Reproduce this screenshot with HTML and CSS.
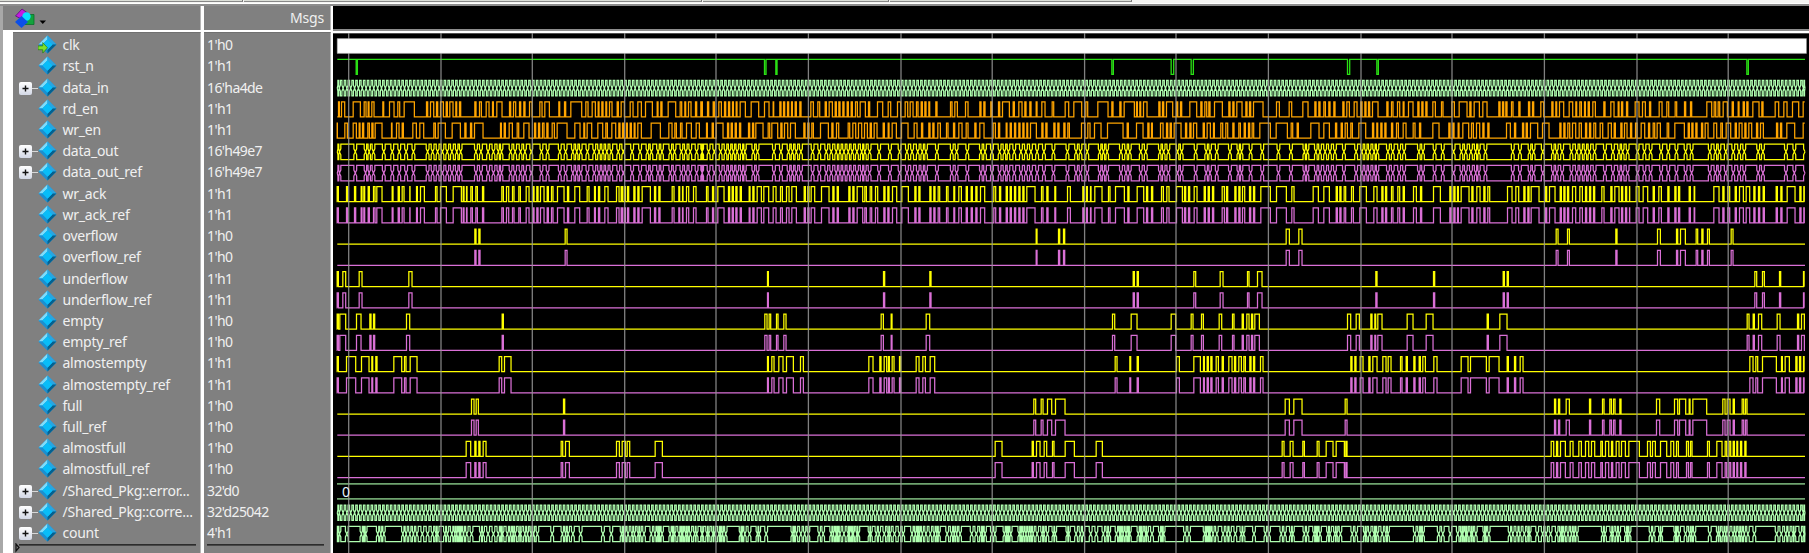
FILE: index.html
```html
<!DOCTYPE html>
<html lang="en">
<head>
<meta charset="utf-8">
<title>Wave</title>
<link rel="stylesheet" href="styles.css">
</head>
<body>
<svg class="defs" width="0" height="0" aria-hidden="true">
  <symbol id="gem" viewBox="0 0 20 20">
    <path d="M10 .6 19.4 10 10 19.4 .6 10z" fill="#1793d6"/>
    <path d="M10 .6 .6 10h4L10 4.800z" fill="#7fdcfa"/>
    <path d="M10 .6 19.400 10h-4L10 4.800z" fill="#2aa5e0"/>
    <path d="M.6 10 10 19.400v-4L4.600 10z" fill="#1c8fd0"/>
    <path d="M19.400 10 10 19.400v-4L15.400 10z" fill="#04618f"/>
    <path d="M10 4.600 15.400 10 10 15.400 4.600 10z" fill="#08bdf8"/>
  </symbol>
</svg>
<div class="window">
  <div class="tabs"><i class="tab t1"></i><i class="tab t2"></i><i class="tab t3"></i><i class="tab t4"></i></div>
  <div class="panes">
    <div class="names">
      <div class="head">
        <svg class="logo" width="34" height="22" viewBox="0 0 34 22">
          <path d="M1.500 8 8 1l5.500 4-6 6z" fill="#c31be0" stroke="#5b0a77" stroke-width=".8"/>
          <path d="M13 6.500h7v10h-9z" fill="#12a33c" stroke="#08702a" stroke-width=".8"/>
          <circle cx="12.500" cy="8.500" r="4.200" fill="#08e0ff"/>
          <path d="M7.500 8 14 14 7.500 20 1 14z" fill="#0b4fe8"/>
          <path d="M25.500 12.500h6.500l-3.200 3.400z" fill="#000"/>
        </svg>
      </div>
      <div class="list" id="names"></div>
    </div>
    <div class="values">
      <div class="head msgs">Msgs</div>
      <div class="list" id="values"></div>
    </div>
    <div class="waves">
      <div class="ruler"></div>
      <svg class="plot" id="plot" width="1476" height="520" viewBox="333 33 1476 520"></svg>
    </div>
  </div>
</div>
<script src="wave.js"></script>
</body>
</html>
```
FILE: styles.css
```css
body {
  margin: 0;
  background: #fff;
  overflow: hidden;
  font-family: "Noto Sans", "Open Sans", sans-serif;
}
.defs { position: absolute; }
.window {
  display: flex;
  flex-direction: column;
  width: 1809px;
  height: 553px;
}
.tabs {
  display: flex;
  gap: 1px;
  height: 3px;
  background: #f4f4f2;
  border-bottom: 1px solid #fff;
}
.tab {
  box-sizing: border-box;
  height: 2px;
  background: #dcdfd8;
  border-right: 1px solid #777;
  border-bottom: 1px solid #888;
}
.t1 { width: 243px; }
.t2 { width: 458px; }
.t3 { width: 186px; }
.t4 { width: 242px; }
.panes {
  box-sizing: border-box;
  display: flex;
  flex: 1;
  border-top: 2px solid #8d8d8d;
}
.names {
  box-sizing: border-box;
  width: 202px;
  border-left: 3px solid #a8a8a8;
  border-right: 1px solid #fff;
  background: #fff;
}
.values {
  box-sizing: border-box;
  width: 131px;
  padding-left: 2px;
  border-right: 2px solid #fff;
  background: #fff;
}
.head {
  box-sizing: border-box;
  height: 24px;
  margin-bottom: 2px;
  background: #808080;
  border-right: 1px solid #b5b5b5;
}
.logo { display: block; margin: 0 0 0 11px; padding-top: 2px; }
.msgs {
  padding-right: 6px;
  text-align: right;
  line-height: 24px;
  font-size: 14px;
  letter-spacing: -.2px;
  color: #f0f0f0;
}
.list {
  box-sizing: border-box;
  height: 521px;
  padding-top: 1px;
  background: #808080;
  border-top: 1px solid #707070;
  border-right: 1px solid #b5b5b5;
}
.names .list { margin-left: 10px; }
.row {
  display: flex;
  align-items: center;
  height: 21.22px;
  font-size: 14px;
  letter-spacing: -.24px;
  color: #f0f0f0;
  white-space: nowrap;
}
.slot {
  display: flex;
  align-items: center;
  justify-content: flex-end;
  width: 25px;
}
.plus {
  box-sizing: border-box;
  width: 13px;
  height: 13px;
  margin-top: 2px;
  background: linear-gradient(#fff, #d3d8e6);
  border-radius: 2px;
}
.plus svg { display: block; }
.link {
  width: 6px;
  height: 1px;
  margin-top: 2px;
  background: #d8d8d8;
}
.gem { flex: none; width: 19px; height: 19px; }
.name { padding-left: 5.500px; }
.values .row { padding-left: 3px; letter-spacing: -.6px; }
.end { display: block; }
.ruler {
  height: 22.500px;
  background: #000;
  border-bottom: 2px solid #8d8d8d;
  margin-bottom: 2px;
}
.waves { width: 1476px; background: #fff; }
.plot { display: block; background: #000; }
.num { font: 14px "Noto Sans", sans-serif; fill: #e8f4ff; }
```
FILE: wave.js
```js
const BASES = [330, 700, 1070, 1430];
const X0 = 337.3, X1 = 1805, CLOCK = 3.843;
const PITCH = 21.23, TOP = 38.1, TALL = 15;

// High intervals per segment, in thirds of a pixel from the segment base.
const W = {
rd: [
'24-29 33-45 68-92 101-109 113-118 124-133 157-162 177-193 202-210 221-254 288-294 300-312 318-324 330-341 347-353 358-370 376-381 387-393 433-439 447-455 467-478 486-491 499-517 537-543 549-558 567-573 580-586 597-607 628-637 643-659 685-690 702-708 721-756 766-775 785-797 803-808 814-820 826-831 837-847 860-866 872-884 899-910 922-935 945-968 980-985 991-997 1013-1038 1049-1056 1063-1068 1074-1084 1095-1101 1112-1118',
'1-8 21-27 38-44 55-65 72-78 84-90 96-101 107-112 119-137 152-177 192-208 218-222 238-244 249-255 261-267 273-278 284-290 298-304 331-341 352-360 374-380 386-398 404-410 415-421 427-433 440-446 452-458 465-473 479-497 504-510 531-549 563-573 591-603 614-624 629-640 648-655 662-668 673-679 685-690 706-712 750-757 763-773 795-805 838-844 850-856 871-877 894-900 906-929 938-944 955-967 973-979 988-994 1007-1012 1024-1036 1055-1062 1094-1107',
'10-36 46-54 82-115 124-130 148-154 161-194 198-203 208-213 219-232 265-271 276-282 288-309 318-324 330-336 358-381 391-397 403-411 415-421 432-458 475-481 487-493 499-517 526-532 537-543 549-580 618-629 656-666 697-715 733-739 745-751 760-767 775-781 790-796 817-823 829-839 851-862 871-877 883-889 894-900 906-925 949-955 963-970 981-990 998-1003 1014-1030 1042-1048 1054-1060 1066-1072',
'7-17 33-40 64-74 86-112 118-124 131-149 157-172 205-211 216-222 226-232 243-250 265-271 294-300 306-312 331-342 364-370 376-381 387-402 416-429 436-441 448-455 462-467 473-479 487-497 520-526 541-553 563-568 573-579 588-594 614-628 636-647 657-663 686-697 709-717 734-741 762-768 780-786 829-846 851-858 863-870 878-893 905-911 923-928 938-944 949-955 967-988 994-1000 1034-1047 1060-1072 1086-1107 1118-1130'],
wr: [
'20-23 43-53 68-80 86-91 96-102 112-119 124-130 134-157 183-187 198-208 215-221 247-260 268-282 310-317 323-347 365-392 403-409 420-426 432-460 510-515 521-527 536-548 560-567 580-598 612-618 624-630 636-643 649-655 665-674 680-712 733-751 760-765 770-786 802-819 826-833 844-858 865-871 876-882 888-893 899-905 911-916 922-935 962-992 1015-1027 1033-1040 1050-1057 1068-1085 1097-1109',
'18-23 35-41 47-70 81-87 92-98 104-110 117-123 144-150 156-162 166-190 203-210 214-234 241-247 252-264 270-287 310-316 322-328 334-341 360-386 394-400 408-417 443-450 457-468 474-486 492-503 509-515 521-532 548-554 563-568 575-590 603-625 641-652 663-669 685-691 697-703 712-722 738-745 759-765 775-787 797-805 823-829 838-853 878-887 894-900 917-922 929-935 942-948 955-961 967-973 979-984 990-1010 1024-1030 1036-1042 1060-1066 1072-1078 1090-1096 1102-1109',
'33-46 52-61 72-94 111-160 170-176 198-220 232-238 243-248 270-280 288-294 299-305 311-334 345-351 358-364 369-381 398-404 410-422 429-434 451-459 466-474 487-493 505-512 521-527 534-540 545-552 568-602 617-653 662-669 680-686 721-748 760-779 795-801 812-818 824-833 841-848 865-888 906-912 919-924 931-937 943-949 963-969 978-986 998-1009 1028-1036 1047-1053',
'7-28 55-61 67-73 83-88 97-117 123-131 138-150 157-163 172-178 228-242 252-258 276-282 287-293 300-324 336-358 388-394 400-406 412-420 426-438 446-455 465-471 477-483 490-498 509-519 533-545 551-557 571-577 582-592 600-606 615-622 632-645 654-660 668-675 680-692 710-717 733-764 773-779 784-790 796-802 813-819 824-835 850-861 871-878 887-903 914-920 926-937 943-949 955-966 978-984 990-1001 1038-1044 1050-1056 1069-1095 1118-1130'],
ack: [
'20-26 48-53 72-78 92-97 100-105 113-119 129-136 139-157 185-190 203-209 215-223 238-241 258-263 270-284 315-322 330-350 368-395 398-403 408-412 421-428 436-443 456-462 514-521 528-537 546-553 565-572 587-598 608-613 619-625 630-643 650-656 663-670 681-703 711-717 733-750 770-778 792-797 804-810 823-835 858-868 872-878 881-887 891-897 910-916 922-928 935-962 972-978 985-991 1025-1033 1045-1050 1056-1060 1068-1077 1089-1099',
'18-25 36-42 52-73 84-90 95-101 106-112 119-125 146-151 157-163 170-185 190-207 218-229 240-248 258-268 274-290 311-317 322-328 332-345 363-388 397-403 410-416 445-451 457-463 470-489 493-500 509-516 525-534 550-556 562-568 576-591 604-626 643-649 655-661 688-694 700-706 713-720 738-745 760-765 775-785 797-803 812-818 826-832 840-855 880-888 897-903 917-923 929-935 942-948 955-961 967-973 979-1006 1023-1030 1039-1045 1063-1068 1101-1112',
'37-43 48-53 60-64 73-97 114-121 135-164 172-178 200-222 228-234 243-249 273-281 289-298 318-338 342-348 354-360 371-382 401-407 413-419 426-432 455-464 468-474 493-499 505-511 516-525 537-543 549-555 571-602 618-650 664-673 728-746 760-779 797-803 808-814 821-828 843-851 868-890 910-922 934-940 945-951 963-970 982-990 998-1004 1029-1040 1050-1056',
'9-32 58-64 70-76 81-86 92-118 124-130 139-151 160-166 172-180 231-247 256-267 280-286 292-298 302-328 345-351 357-376 389-395 400-406 411-417 426-438 448-458 465-471 477-483 489-495 514-523 541-547 553-568 573-579 585-591 597-600 617-628 638-654 668-674 685-695 712-718 733-739 744-750 776-782 791-795 850-868 877-883 892-900 914-920 927-941 947-960 970-976 984-990 998-1004 1037-1043 1051-1057 1070-1096 1108-1114 1120-1126'],
overflow: ['433-439 445-451 704-712', '1007-1012 1074-1080 1089-1095', '647-659 685-697', '377-385 411-419 556-562 681-692 738-744 750-767 797-804 814-820 831-839 902-910'],
underflow: ['20-26 37-48 86-97 235-247', '201-206 549-555 688-694', '188-194 200-206 370-378 449-460 531-538 561-577 916-922', '9-15 218-224 230-236 973-981 996-1004 1047-1053 1119-1130'],
empty: ['20-26 28-48 78-94 118-124 129-135 228-240 515-521', '193-202 206-213 228-235 250-259 542-551 572-577 677-690', '126-135 182-202 302-318 362-370 393-401 446-456 486-493 515-521 529-538 543-549 553-569 831-843 857-869 901-907 913-918 922-937 1010-1030 1067-1090', '170-176 208-232 950-958 968-974 984-996 1040-1051 1101-1107 1113-1124'],
aempty: ['20-26 48-78 93-118 124-129 136-142 190-216 222-229 239-262 506-516 522-544', '201-206 214-223 235-250 258-281 300-311 505-520 538-544 551-561 564-569 575-583 597-603 647-658 667-677 689-705', '134-142 178-183 200-206 318-329 370-392 399-404 410-416 421-427 437-446 455-461 475-487 492-498 505-515 520-527 538-544 549-555 570-580 841-847 853-859 869-880 895-901 907-922 937-949 953-964 990-997 1007-1013 1030-1036 1046-1052 1057-1067', '10-22 92-115 120-170 176-208 230-236 252-258 269-280 958-970 976-984 996-1040 1053-1058 1064-1079 1096-1102 1107-1113 1119-1125'],
full: ['423-433 437-446 699-705', '1000-1008 1022-1030 1041-1056 1065-1096', '644-659 670-697 824-832', '372-378 384-390 407-419 477-483 516-523 538-545 549-556 568-574 678-690 732-744 747-768 776-781 787-831 877-886 890-901 908-914 935-942 945-952'],
afull: ['407-423 433-439 445-451 458-469 692-699 705-719 858-869 875-887 890-900 974-998', '884-907 995-1001 1008-1021 1031-1041 1056-1063 1094-1124', '77-98 635-643 659-670 697-704 740-748 767-790 797-824 826-832', '362-372 378-384 390-407 419-430 445-455 465-477 483-495 511-518 525-537 543-549 557-568 573-587 595-629 651-662 666-677 690-711 721-732 738-746 768-776 780-787 831-839 859-877 884-891 896-903 908-914 919-924 930-936 943-949'],
rstLow: ['77-83', '192-199 226-232', '124-131 302-312 362-371 831-840 919-926', '949-956']
};
const S = {};
for (const k in W) {
  S[k] = W[k].flatMap((s, i) => s.split(' ').map(p => p.split('-').map(v => Math.min(X1, BASES[i] + v / 3))));
}
const isHigh = (list, x) => list.some(([a, b]) => x >= a && x < b);

const yTop = row => TOP + PITCH * row;
const f = n => n.toFixed(2);

function bit(list, row, inverted) {
  const hi = yTop(row), lo = hi + TALL;
  const rest = inverted ? hi : lo, active = inverted ? lo : hi;
  let d = `M${X0} ${f(rest)}`;
  for (const [a, b] of list) {
    const l = a + .5, r = b - .3;
    d += `H${f(l)}V${f(active)}`;
    // One-cycle pulses are painted solid.
    if (b - a < 2.2) d += `H${f((l + r) / 2)}V${f(rest)}V${f(active)}`;
    d += `H${f(r)}`;
    if (b < X1) d += `V${f(rest)}`;
  }
  return list[list.length - 1][1] >= X1 ? d : d + `H${X1}`;
}

function bus(edges, row) {
  const t = yTop(row) - .1, b = t + 15.400, m = (t + b) / 2, n = edges.length;
  let up = '', down = '';
  for (let i = 0; i <= n; i++) {
    const left = i ? edges[i - 1] : X0, right = i < n ? edges[i] : X1;
    const s = Math.min(1.400, (right - left) * .3);
    const l = left + s, r = right - s;
    up += `${i ? 'L' : 'M'}${f(left)} ${f(m)}L${f(l)} ${f(m - 3)}V${f(t)}H${f(r)}V${f(m - 3)}L${f(right)} ${f(m)}`;
    down += `${i ? 'L' : 'M'}${f(left)} ${f(m)}L${f(l)} ${f(m + 3)}V${f(b)}H${f(r)}V${f(m + 3)}L${f(right)} ${f(m)}`;
  }
  return up + down;
}

// Clock edges that fall inside the high intervals of a signal.
function edgesOf(list) {
  return list.flatMap(([a, b]) => {
    const n = Math.max(1, Math.round((b - a) / CLOCK));
    return Array.from({ length: n }, (_, i) => a + (i + .5) * (b - a) / n);
  });
}
const every = [];
for (let x = X0 + CLOCK / 2; x < X1; x += CLOCK) every.push(x);
const out = edgesOf(S.rd).filter(x => !isHigh(S.empty, x)).map(x => x + .6);
const near = (list, x) => list.some(v => Math.abs(v - x) < 1);
const acks = edgesOf(S.ack);
const cnt = out.filter(x => !near(acks, x)).concat(acks.filter(x => !near(out, x))).sort((a, b) => a - b);

const Y = '#ffff00', P = '#da70d6', O = '#ffa500', G = '#b0ffb0';
const grid = [348.7, 441, 532.3, 624.7, 716, 808.4, 901, 992.2, 1084.6, 1176, 1268.4, 1361, 1452, 1544.4, 1637, 1728.2];
const gridPath = grid.map(x => `M${x} 33V553`).join('');
const draw = (d, c, w = 1.250) => `<path d="${d}" fill="none" stroke="${c}" stroke-width="${w}"/>`;

let svg = `<path d="M333 33.300H1809" stroke="#666"/>`;
svg += draw(bit(S.rstLow, 1, true), '#2ae014', 1.300);
svg += draw(bus(every, 2), G);
svg += draw(bit(S.rd, 3), O) + draw(bit(S.wr, 4), O);
svg += draw(bus(out, 5), Y) + draw(bus(out, 6), P);
svg += draw(bit(S.ack, 7), Y) + draw(bit(S.ack, 8), P);
['overflow', 'underflow', 'empty', 'aempty', 'full', 'afull'].forEach((k, i) => {
  svg += draw(bit(S[k], 9 + 2 * i), Y) + draw(bit(S[k], 10 + 2 * i), P);
});
svg += draw(`M337 ${f(yTop(21))}H${X1}M337 ${f(yTop(21) + 15)}H${X1}`, '#6fa36f', 1.800);
svg += draw(bus(every, 22), G) + draw(bus(cnt, 23), G);
svg += draw(gridPath, 'rgba(150,150,150,.85)', 1.300);
svg += `<path d="M337.200 38.600H1806.500V53.400H337.200z" fill="#fff" stroke="#999" stroke-width=".5"/>`;
svg += `<text class="num" x="342" y="497">0</text>`;
document.getElementById('plot').innerHTML = svg;

const rows = [['clk', "1'h0"], ['rst_n', "1'h1"], ['data_in', "16'ha4de", 1], ['rd_en', "1'h1"], ['wr_en', "1'h1"],
  ['data_out', "16'h49e7", 1], ['data_out_ref', "16'h49e7", 1], ['wr_ack', "1'h1"], ['wr_ack_ref', "1'h1"],
  ['overflow', "1'h0"], ['overflow_ref', "1'h0"], ['underflow', "1'h1"], ['underflow_ref', "1'h1"],
  ['empty', "1'h0"], ['empty_ref', "1'h0"], ['almostempty', "1'h1"], ['almostempty_ref', "1'h1"],
  ['full', "1'h0"], ['full_ref', "1'h0"], ['almostfull', "1'h0"], ['almostfull_ref', "1'h0"],
  ['/Shared_Pkg::error...', "32'd0", 1], ['/Shared_Pkg::corre...', "32'd25042", 1], ['count', "4'h1", 1]];

const plus = '<span class="plus"><svg width="13" height="13"><path d="M3.500 6.500h6M6.500 3.500v6" stroke="#111" stroke-width="1.400"/></svg></span><span class="link"></span>';
const arrow = '<path d="M0 11.500h5V8l5 5.500-5 5.500v-3.500H0z" fill="#7fe02a" stroke="#1d7a10" stroke-width=".7"/>';
document.getElementById('names').innerHTML = rows.map(([name, , open], i) =>
  `<div class="row"><span class="slot">${open ? plus : ''}</span><svg class="gem" viewBox="0 0 20 20"><use href="#gem"/>${i ? '' : arrow}</svg><span class="name">${name}</span></div>`
).join('') + '<svg class="end" width="186" height="10"><path d="M3 1v7l3-3.500zM6 1.800H183" fill="none" stroke="#111" stroke-width="1.300"/></svg>';
document.getElementById('values').innerHTML = rows.map(r => `<div class="row">${r[1]}</div>`).join('') +
  '<svg class="end" width="122" height="10"><path d="M3 1.800H120" stroke="#111" stroke-width="1.300"/></svg>';
```
